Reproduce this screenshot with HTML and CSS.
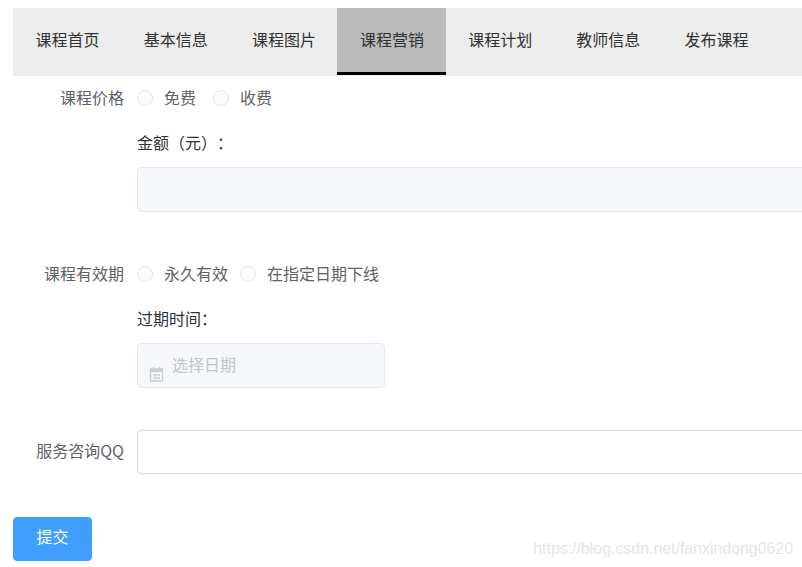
FILE: index.html
```html
<!DOCTYPE html>
<html lang="zh-CN">
<head>
<meta charset="utf-8">
<title>课程营销</title>
<link rel="stylesheet" href="styles.css">
</head>
<body>
<nav class="tabs">
  <a class="tab">课程首页</a>
  <a class="tab">基本信息</a>
  <a class="tab">课程图片</a>
  <a class="tab tab-active">课程营销</a>
  <a class="tab">课程计划</a>
  <a class="tab">教师信息</a>
  <a class="tab">发布课程</a>
</nav>
<form class="form">
  <section class="row row-price">
    <div class="label">课程价格</div>
    <div class="control">
      <div class="radios">
        <label class="radio"><span class="dot"></span>免费</label>
        <label class="radio"><span class="dot"></span>收费</label>
      </div>
      <div class="sublabel">金额（元）：</div>
      <div class="field field-disabled"></div>
    </div>
  </section>
  <section class="row row-valid">
    <div class="label">课程有效期</div>
    <div class="control">
      <div class="radios">
        <label class="radio radio-tight"><span class="dot"></span>永久有效</label>
        <label class="radio"><span class="dot"></span>在指定日期下线</label>
      </div>
      <div class="sublabel">过期时间：</div>
      <div class="field field-disabled field-date">
        <svg class="cal" width="15" height="16" viewBox="0 0 15 16" aria-hidden="true">
          <path d="M1.5 3h12v12h-12z" fill="none" stroke="#c8ccd3" stroke-width="1.4"/>
          <path d="M1.5 4.5h12" stroke="#c8ccd3" stroke-width="3"/>
          <path d="M4.5 1v3M10.5 1v3" stroke="#c8ccd3" stroke-width="1.4"/>
          <path d="M4 9h7M4 12h7" stroke="#c8ccd3" stroke-width="1.4"/>
        </svg>
        <span class="placeholder">选择日期</span>
      </div>
    </div>
  </section>
  <section class="row row-qq">
    <div class="label label-field">服务咨询QQ</div>
    <div class="control">
      <div class="field field-plain"></div>
    </div>
  </section>
  <button class="submit" type="button">提交</button>
</form>
<div class="watermark">https://blog.csdn.net/fanxindong0620</div>
</body>
</html>
```
FILE: styles.css
```css
html, body {
  height: 100%;
}
body {
  margin: 0;
  padding-top: 8px;
  box-sizing: border-box;
  position: relative;
  overflow: hidden;
  background: #fff;
  font-family: "Noto Sans CJK SC", "Liberation Sans", sans-serif;
  font-size: 16px;
  color: #606266;
}
.tabs {
  display: flex;
  margin-left: 13px;
  height: 68px;
  background: #ededed;
}
.tab {
  box-sizing: border-box;
  width: 108.15px;
  height: 67px;
  padding-left: 22.6px;
  line-height: 62px;
  color: #303133;
  white-space: nowrap;
}
.tab-active {
  background: #bbbbbb;
  border-bottom: 3px solid #000;
}
.form {
  padding-top: 12px;
  margin-left: 13px;
}
.row {
  display: flex;
  gap: 13px;
}
.row-valid {
  margin-top: 52px;
}
.row-qq {
  margin-top: 42px;
}
.label {
  flex: none;
  width: 111px;
  text-align: right;
  line-height: 18px;
  white-space: nowrap;
}
.label-field {
  line-height: 41px;
}
.control {
  flex: none;
  width: 680px;
}
.radios {
  display: flex;
  gap: 17px;
  height: 20px;
  line-height: 18px;
}
.radio {
  display: flex;
  align-items: flex-start;
  gap: 11px;
  white-space: nowrap;
}
.radio-tight {
  margin-right: -5px;
}
.dot {
  box-sizing: border-box;
  width: 16px;
  height: 16px;
  margin-top: 2px;
  border: 1.5px solid #e4e6ec;
  border-radius: 50%;
  background: #fcfcfe;
}
.sublabel {
  height: 20px;
  margin: 25px 0 14px;
  line-height: 18px;
  color: #303133;
  white-space: nowrap;
  text-spacing-trim: space-all;
}
.field {
  box-sizing: border-box;
  height: 45px;
  border: 1px solid #dcdfe6;
  border-radius: 4px;
  background: #fff;
}
.field-plain {
  height: 44px;
  border-color: #d8dade;
}
.field-disabled {
  border-color: #e4e7ed;
  background: #f5f7fa;
}
.field-date {
  display: flex;
  width: 248px;
  padding-left: 11px;
  gap: 8px;
}
.cal {
  flex: none;
  margin-top: 22px;
}
.placeholder {
  line-height: 40px;
  color: #c0c4cc;
}
.submit {
  display: block;
  box-sizing: border-box;
  width: 79px;
  height: 44px;
  margin-top: 43px;
  padding: 0 0 6px;
  border: 1px solid #409eff;
  border-radius: 4px;
  background: #409eff;
  color: #fff;
  font: inherit;
}
.watermark {
  position: absolute;
  right: 9px;
  bottom: 8px;
  font-family: "Liberation Sans", sans-serif;
  font-size: 15.9px;
  line-height: 20px;
  color: #e6e6e6;
  white-space: nowrap;
}
```
